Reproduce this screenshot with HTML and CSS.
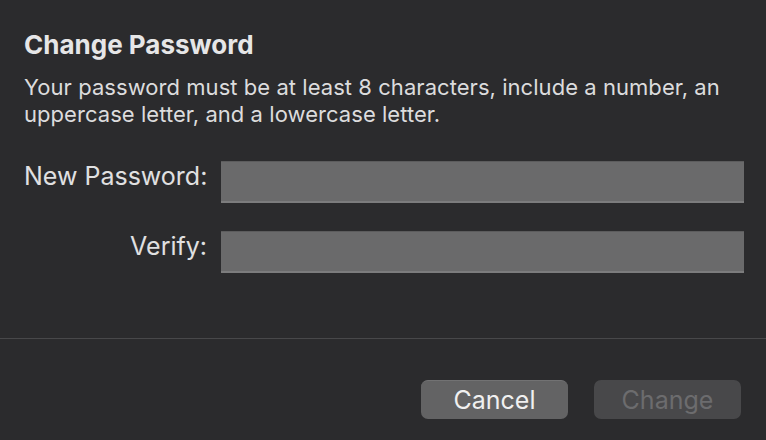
FILE: index.html
```html
<!DOCTYPE html>
<html>
<head>
<meta charset="utf-8">
<link rel="stylesheet" href="styles.css">
</head>
<body>
<div class="dialog">
  <div class="content">
    <h1 class="title">Change Password</h1>
    <p class="desc">Your password must be at least 8 characters, include a number, an uppercase letter, and a lowercase letter.</p>
    <div class="form">
      <label class="label">New Password:</label>
      <div class="field"></div>
      <label class="label">Verify:</label>
      <div class="field"></div>
    </div>
  </div>
  <div class="footer">
    <button class="btn btn-cancel">Cancel</button>
    <button class="btn btn-change">Change</button>
  </div>
</div>
</body>
</html>
```
FILE: styles.css
```css
html, body {
  margin: 0;
  padding: 0;
  background: #2b2b2d;
}
body {
  width: 766px;
  height: 440px;
  overflow: hidden;
  font-family: Inter, "Liberation Sans", sans-serif;
  color: #e4e4e5;
}
.dialog {
  display: flex;
  flex-direction: column;
  height: 440px;
}
.content {
  box-sizing: border-box;
  padding: 29px 22px 0 24px;
  height: 339px;
  border-bottom: 1px solid #48484a;
}
.title {
  margin: 0;
  font-size: 26px;
  font-weight: 700;
  line-height: 32px;
  color: #e6e6e7;
}
.desc {
  margin: 13px 0 0 0;
  font-size: 22px;
  line-height: 27px;
  letter-spacing: 0.05px;
  color: #dcdcdd;
}
.form {
  display: grid;
  grid-template-columns: 183px 1fr;
  column-gap: 14px;
  row-gap: 28px;
  margin-top: 33px;
  align-items: start;
}
.label {
  text-align: right;
  font-size: 25px;
  line-height: 30px;
  color: #e0e0e1;
  white-space: nowrap;
}
.field {
  height: 39px;
  background: #6a6a6b;
  border-top: 1px solid #5c5c5d;
  border-bottom: 2px solid #7c7c7d;
}
.footer {
  display: flex;
  justify-content: flex-end;
  gap: 26px;
  padding: 41px 25px 0 0;
}
.btn {
  width: 147px;
  height: 39px;
  border: none;
  border-radius: 7px;
  font-family: Inter, "Liberation Sans", sans-serif;
  font-size: 25px;
  padding: 0;
}
.btn-cancel {
  background: #636364;
  color: #f0f0f0;
  border-top: 1px solid #727273;
}
.btn-change {
  background: #48484a;
  color: #6c6c6e;
}
```
